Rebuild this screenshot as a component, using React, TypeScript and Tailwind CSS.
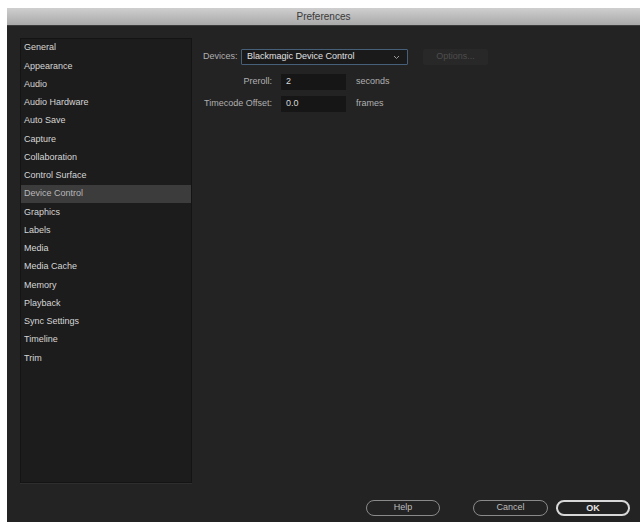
const CATEGORIES = [
  'General',
  'Appearance',
  'Audio',
  'Audio Hardware',
  'Auto Save',
  'Capture',
  'Collaboration',
  'Control Surface',
  'Device Control',
  'Graphics',
  'Labels',
  'Media',
  'Media Cache',
  'Memory',
  'Playback',
  'Sync Settings',
  'Timeline',
  'Trim',
];

const SELECTED = 'Device Control';

export default function App() {
  return (
    <div
      className="w-[640px] h-[526px] bg-white pt-[8px] pl-[7px] overflow-hidden"
      style={{ fontFamily: '"Liberation Sans", Arial, sans-serif' }}
    >
      <div className="w-[633px] h-[514px] flex flex-col bg-[#232323]">
        {/* Title bar */}
        <div className="h-[18px] shrink-0 flex items-center justify-center bg-gradient-to-b from-[#cfcfcf] to-[#a9a9a9] border-b border-[#3a3a3a]">
          <span className="text-[10px] text-[#3a3a3a]">Preferences</span>
        </div>

        {/* Body */}
        <div className="flex-1 flex flex-col pt-[12px] pl-[13px] pr-[10px]">
          <div className="flex">
            {/* Category list */}
            <div className="w-[172px] h-[445px] bg-[#1c1c1c] border border-[#141414] shadow-[0_1px_0_#2e2e2e]">
              {CATEGORIES.map((c) => (
                <div
                  key={c}
                  className={`h-[18.25px] flex items-center pl-[3px] text-[9px] ${
                    c === SELECTED ? 'bg-[#3c3c3c] text-[#b8b8b8]' : 'text-[#d6d6d6]'
                  }`}
                >
                  {c}
                </div>
              ))}
            </div>

            {/* Device control settings */}
            <div className="ml-[11px] pt-[11px] flex flex-col">
              <div className="flex items-center h-[16px]">
                <span className="w-[38px] text-[9px] text-[#b0b0b0]">Devices:</span>
                <div className="w-[167px] h-[16px] flex items-center justify-between px-[5px] bg-[#1a1a1a] border border-[#46607a] rounded-[1px]">
                  <span className="text-[9px] text-[#e0e0e0]">Blackmagic Device Control</span>
                  <svg width="7" height="5" viewBox="0 0 7 5" className="mr-[2px]">
                    <path d="M1 1l2.5 2.5L6 1" fill="none" stroke="#9a9a9a" strokeWidth="1" />
                  </svg>
                </div>
                <div className="ml-[15px] w-[65px] h-[16px] flex items-center justify-center bg-[#282828] rounded-[2px]">
                  <span className="text-[9px] text-[#4e4e4e]">Options...</span>
                </div>
              </div>

              <div className="flex items-center h-[16px] mt-[9px]">
                <span className="w-[69px] text-right text-[9px] text-[#b0b0b0]">Preroll:</span>
                <div className="ml-[9px] w-[65px] h-[16px] flex items-center px-[5px] bg-[#161616]">
                  <span className="text-[9px] text-[#d8d8d8]">2</span>
                </div>
                <span className="ml-[10px] text-[9px] text-[#b0b0b0]">seconds</span>
              </div>

              <div className="flex items-center h-[16px] mt-[6px]">
                <span className="w-[69px] text-right text-[9px] text-[#b0b0b0]">Timecode Offset:</span>
                <div className="ml-[9px] w-[65px] h-[16px] flex items-center px-[5px] bg-[#161616]">
                  <span className="text-[9px] text-[#d8d8d8]">0.0</span>
                </div>
                <span className="ml-[10px] text-[9px] text-[#b0b0b0]">frames</span>
              </div>
            </div>
          </div>

          {/* Dialog buttons */}
          <div className="flex justify-end mt-[17px]">
            <button className="w-[74px] h-[16px] rounded-full border border-[#8a8a8a] text-[9px] text-[#bdbdbd]">
              Help
            </button>
            <button className="ml-[33px] w-[75px] h-[16px] rounded-full border border-[#8a8a8a] text-[9px] text-[#bdbdbd]">
              Cancel
            </button>
            <button className="ml-[8px] w-[74px] h-[16px] rounded-full border-2 border-[#d8d8d8] text-[9px] font-bold text-[#e6e6e6]">
              OK
            </button>
          </div>
        </div>
      </div>
    </div>
  );
}
